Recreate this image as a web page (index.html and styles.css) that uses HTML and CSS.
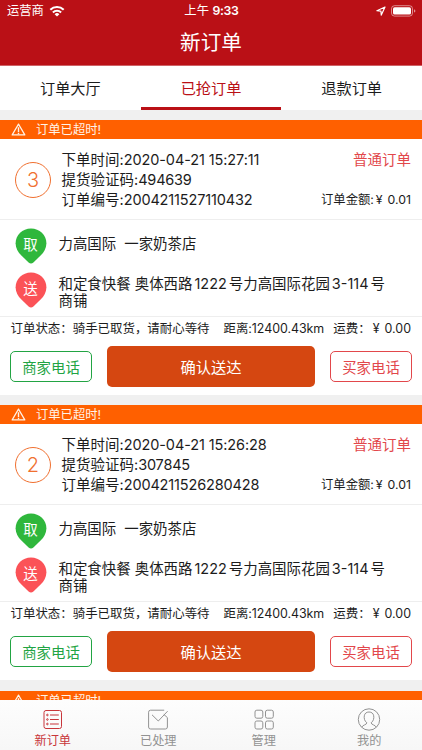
FILE: index.html
```
<!DOCTYPE html>
<html lang="zh-CN">
<head>
    <meta charset="UTF-8">
    <meta name="viewport" content="width=device-width, initial-scale=1.0">
    <title>新订单</title>
    <link rel="stylesheet" href="styles.css">
</head>
<body>
    <svg class="defs" width="0" height="0">
        <symbol id="warn" viewBox="0 0 16 14">
            <path d="M8 1.2 L14.8 12.8 H1.2 Z" fill="none" stroke="currentColor" stroke-width="1.3" stroke-linejoin="round"/>
            <path d="M8 4.6 V9.6 M8 10.6 V12" stroke="currentColor" stroke-width="1.5"/>
        </symbol>
        <symbol id="pin" viewBox="0 0 32 36">
            <path d="M16 0.5 C7.4 0.5 0.6 7.2 0.6 15.2 C0.6 20.2 3 24.2 6.4 27.6 L13.6 34.4 Q16 36.4 18.4 34.4 L25.6 27.6 C29 24.2 31.4 20.2 31.4 15.2 C31.4 7.2 24.6 0.5 16 0.5 Z" fill="currentColor"/>
        </symbol>
    </svg>

    <div class="app">
        <header class="header">
            <div class="status-bar">
                <div class="carrier">
                    <span>运营商</span>
                    <svg width="16" height="12" viewBox="0 0 16 12" fill="none" stroke="#fff" stroke-width="2.1">
                        <path d="M1.3 4.7 A9.6 9.6 0 0 1 14.7 4.7"/>
                        <path d="M3.9 7.4 A5.9 5.9 0 0 1 12.1 7.4"/>
                        <path d="M8 11.6 L5.6 9.2 A3.5 3.5 0 0 1 10.4 9.2 Z" fill="#fff" stroke="none"/>
                    </svg>
                </div>
                <div class="clock">上午 <b>9:33</b></div>
                <div class="power">
                    <svg width="10" height="10" viewBox="0 0 10 10" fill="none" stroke="#fff" stroke-width="1.2" stroke-linejoin="round">
                        <path d="M9 1 L0.9 4.7 L4.9 5.1 L5.3 9.1 Z"/>
                    </svg>
                    <svg width="25" height="12" viewBox="0 0 25 12">
                        <rect x="0.5" y="0.7" width="21" height="10.4" rx="3" fill="none" stroke="#fff" stroke-opacity="0.5"/>
                        <rect x="2" y="2.2" width="18" height="7.4" rx="1.6" fill="#fff"/>
                        <path d="M23 4.2 V7.6 Q24.4 7 24.4 5.9 T23 4.2" fill="#fff" fill-opacity="0.55"/>
                    </svg>
                </div>
            </div>
            <h1 class="title">新订单</h1>
        </header>

        <nav class="tabs">
            <a class="tab">订单大厅</a>
            <a class="tab active">已抢订单</a>
            <a class="tab">退款订单</a>
        </nav>

        <main class="orders">
            <section class="order">
                <div class="alert"><svg width="15" height="13"><use href="#warn"/></svg>订单已超时!</div>
                <div class="info">
                    <div class="number">3</div>
                    <div class="details">
                        <div>下单时间:<span class="date">2020-04-21 15:27:11</span></div>
                        <div>提货验证码:<span class="code">494639</span></div>
                        <div>订单编号:<span class="serial">2004211527110432</span></div>
                    </div>
                    <div class="side">
                        <div class="type">普通订单</div>
                        <div class="amount">订单金额:<span class="yen">¥</span>0.01</div>
                    </div>
                </div>
                <div class="route">
                    <div class="stop">
                        <div class="pin pickup"><svg width="32" height="36"><use href="#pin"/></svg><span>取</span></div>
                        <div class="place">力高国际<span class="gap"></span>一家奶茶店</div>
                    </div>
                    <div class="stop">
                        <div class="pin deliver"><svg width="32" height="36"><use href="#pin"/></svg><span>送</span></div>
                        <div class="place address">和定食快餐 奥体西路<span class="num">1222</span>号力高国际花园<span class="num">3-114</span>号<br>商铺</div>
                    </div>
                </div>
                <div class="state">
                    <span>订单状态：骑手已取货，请耐心等待</span>
                    <span class="distance">距离:12400.43km</span>
                    <span>运费：<span class="yen">¥</span>0.00</span>
                </div>
                <div class="actions">
                    <button class="call seller">商家电话</button>
                    <button class="confirm">确认送达</button>
                    <button class="call buyer">买家电话</button>
                </div>
            </section>

            <section class="order">
                <div class="alert"><svg width="15" height="13"><use href="#warn"/></svg>订单已超时!</div>
                <div class="info">
                    <div class="number">2</div>
                    <div class="details">
                        <div>下单时间:<span class="date">2020-04-21 15:26:28</span></div>
                        <div>提货验证码:<span class="code">307845</span></div>
                        <div>订单编号:<span class="serial">2004211526280428</span></div>
                    </div>
                    <div class="side">
                        <div class="type">普通订单</div>
                        <div class="amount">订单金额:<span class="yen">¥</span>0.01</div>
                    </div>
                </div>
                <div class="route">
                    <div class="stop">
                        <div class="pin pickup"><svg width="32" height="36"><use href="#pin"/></svg><span>取</span></div>
                        <div class="place">力高国际<span class="gap"></span>一家奶茶店</div>
                    </div>
                    <div class="stop">
                        <div class="pin deliver"><svg width="32" height="36"><use href="#pin"/></svg><span>送</span></div>
                        <div class="place address">和定食快餐 奥体西路<span class="num">1222</span>号力高国际花园<span class="num">3-114</span>号<br>商铺</div>
                    </div>
                </div>
                <div class="state">
                    <span>订单状态：骑手已取货，请耐心等待</span>
                    <span class="distance">距离:12400.43km</span>
                    <span>运费：<span class="yen">¥</span>0.00</span>
                </div>
                <div class="actions">
                    <button class="call seller">商家电话</button>
                    <button class="confirm">确认送达</button>
                    <button class="call buyer">买家电话</button>
                </div>
            </section>

            <section class="order">
                <div class="alert"><svg width="15" height="13"><use href="#warn"/></svg>订单已超时!</div>
            </section>
        </main>

        <footer class="tab-bar">
            <a class="item active">
                <svg width="24" height="24" viewBox="0 0 24 24" fill="none" stroke="currentColor">
                    <rect x="3" y="3.5" width="17.5" height="18" rx="2"/>
                    <path d="M9 8 H17.8 M9 12.5 H17.8 M9 17 H17.8"/>
                    <circle cx="6.4" cy="8" r="0.8"/><circle cx="6.4" cy="12.5" r="0.8"/><circle cx="6.4" cy="17" r="0.8"/>
                </svg>
                <span>新订单</span>
            </a>
            <a class="item">
                <svg width="24" height="24" viewBox="0 0 24 24" fill="none" stroke="currentColor">
                    <path d="M18.2 3.2 H4.6 Q2.6 3.2 2.6 5.2 V20 Q2.6 22 4.6 22 H19.4 Q21.4 22 21.4 20 V10.6 L17.8 7.4"/>
                    <path d="M6 7.8 L12.3 14 L21.6 4.2"/>
                </svg>
                <span>已处理</span>
            </a>
            <a class="item">
                <svg width="24" height="24" viewBox="0 0 24 24" fill="none" stroke="currentColor">
                    <rect x="3" y="3.2" width="7.8" height="8" rx="1.8"/><rect x="13.5" y="3.2" width="7.8" height="8" rx="1.8"/>
                    <rect x="3" y="14" width="7.8" height="8" rx="1.8"/><rect x="13.5" y="14" width="7.8" height="8" rx="1.8"/>
                </svg>
                <span>管理</span>
            </a>
            <a class="item">
                <svg width="24" height="24" viewBox="0 0 24 24" fill="none" stroke="currentColor">
                    <circle cx="12" cy="12.5" r="10.7"/>
                    <path d="M4.8 20.2 C5.6 17.7 9.8 18 9.8 15.8 C7.2 13.8 7 10.8 7.3 8.8 C7.7 6.4 9.4 5 12 5 C14.6 5 16.3 6.4 16.7 8.8 C17 10.8 16.8 13.8 14.2 15.8 C14.2 18 18.4 17.7 19.2 20.2"/>
                </svg>
                <span>我的</span>
            </a>
        </footer>
    </div>
</body>
</html>
```
FILE: styles.css
```
* {
    box-sizing: border-box;
}
body {
    margin: 0;
    font-family: Inter, "Noto Sans CJK SC", sans-serif;
    color: #1c1c1c;
    background: #f0f0f0;
}
.defs {
    display: none;
}
.app {
    display: flex;
    flex-direction: column;
    height: 750px;
    overflow: hidden;
}

/* header */
.header {
    flex: none;
    height: 66px;
    background: #ba1016;
    color: #fff;
    border-bottom: 1px solid #cf6266;
}
.status-bar {
    display: grid;
    grid-template-columns: 1fr auto 1fr;
    align-items: center;
    height: 22px;
    padding: 0 6px 0 7px;
    font-size: 12.3px;
    line-height: 22px;
}
.carrier,
.power {
    display: flex;
    align-items: center;
    gap: 5px;
}
.power {
    justify-content: flex-end;
}
.clock b {
    font-weight: 600;
    letter-spacing: -0.3px;
}
.title {
    margin: 0;
    font-size: 20.6px;
    font-weight: 400;
    line-height: 41px;
    text-align: center;
}

/* tabs */
.tabs {
    display: flex;
    flex: none;
    height: 44px;
    background: #fff;
}
.tab {
    flex: 1;
    font-size: 15.2px;
    line-height: 45px;
    text-align: center;
}
.tab.active {
    color: #ba1016;
    border-bottom: 3px solid #ba1016;
}

/* orders */
.orders {
    flex: 1;
    min-height: 0;
    overflow: hidden;
    padding-top: 10px;
}
.order {
    height: 275px;
    margin-bottom: 10.3px;
    background: #fff;
}
.alert {
    display: flex;
    align-items: center;
    gap: 10px;
    height: 19px;
    padding-left: 11px;
    background: #ff6000;
    color: #fff3e8;
    font-size: 12.3px;
    line-height: 19px;
}
.info {
    display: flex;
    height: 81px;
    padding: 11px 11px 0 15px;
    border-bottom: 1px solid #eee;
}
.number {
    width: 36px;
    height: 36px;
    margin: 12px 10.5px 0 0;
    border: 1px solid #f07030;
    border-radius: 50%;
    color: #f07030;
    font-size: 20px;
    font-weight: 300;
    line-height: 35px;
    text-align: center;
}
.details {
    flex: 1;
    font-size: 14.5px;
    line-height: 20px;
    white-space: nowrap;
}
.date {
    letter-spacing: -0.1px;
}
.code {
    letter-spacing: -0.2px;
}
.serial {
    letter-spacing: -0.15px;
}
.side {
    display: flex;
    flex-direction: column;
    justify-content: space-between;
    height: 60px;
    line-height: 20px;
    text-align: right;
}
.type {
    color: #e2474b;
    font-size: 14.5px;
}
.amount {
    font-size: 12.3px;
}
.yen {
    margin: 0 5px 0 2px;
}
.route {
    height: 97px;
    padding: 8px 0 0 15px;
    border-bottom: 1px solid #eee;
}
.stop {
    display: flex;
    gap: 12.5px;
    height: 44px;
}
.pin {
    position: relative;
    width: 31px;
}
.pin svg {
    display: block;
}
.pin span {
    position: absolute;
    top: 0;
    left: 0;
    width: 31px;
    color: #fff;
    font-size: 14.5px;
    line-height: 34px;
    text-align: center;
}
.pickup {
    color: #2fb73c;
}
.deliver {
    color: #fb5257;
}
.place {
    padding-top: 7px;
    font-size: 14.45px;
    line-height: 17px;
    white-space: nowrap;
}
.address {
    padding-top: 3px;
}
.gap {
    display: inline-block;
    width: 8px;
}
.num {
    margin: 0 2px;
}
.state {
    display: flex;
    height: 29px;
    padding: 0 11px 0 10.5px;
    font-size: 12.45px;
    line-height: 23px;
    white-space: nowrap;
}
.distance {
    margin: 0 auto 0 14px;
    letter-spacing: -0.05px;
}
.actions {
    display: flex;
    justify-content: space-between;
    align-items: center;
    height: 41px;
    padding: 0 10px;
}
.actions button {
    padding: 0;
    font-family: inherit;
    background: #fff;
}
.call {
    width: 82px;
    height: 31px;
    border: 1px solid;
    border-radius: 5px;
    font-size: 14.4px;
}
.seller {
    color: #22a443;
}
.buyer {
    color: #e2474b;
}
.actions .confirm {
    width: 208px;
    height: 41px;
    padding-bottom: 1px;
    border: 0;
    border-radius: 5px;
    background: #d54711;
    color: #fff;
    font-size: 15.3px;
}

/* bottom bar */
.tab-bar {
    display: flex;
    flex: none;
    height: 50px;
    background: linear-gradient(#fdfdfd, #f7f7f7);
}
.item {
    flex: 1;
    display: flex;
    flex-direction: column;
    align-items: center;
    padding-top: 7px;
    color: #929292;
    font-size: 12.2px;
    line-height: 20px;
}
.item.active {
    color: #c8353a;
}
.item svg {
    display: block;
    flex: none;
}
```
